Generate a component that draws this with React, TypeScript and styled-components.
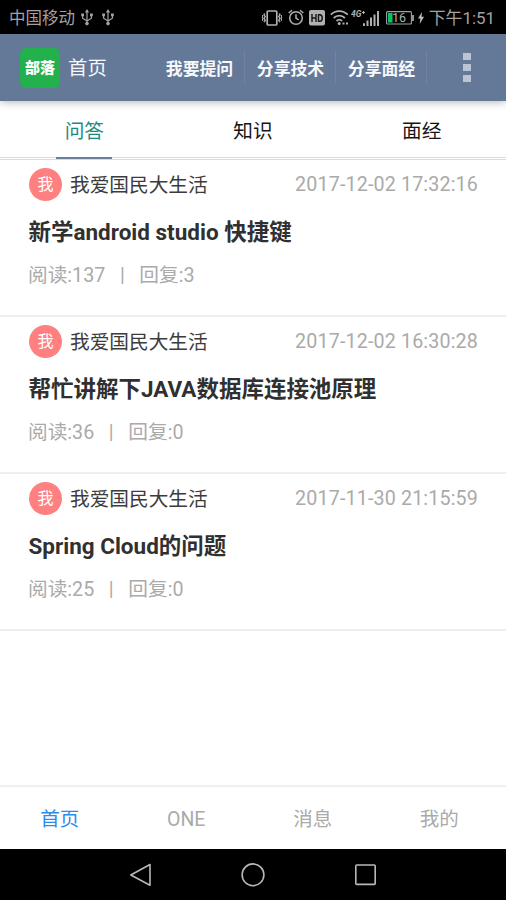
import React from 'react';
import styled, { createGlobalStyle } from 'styled-components';

const GlobalStyle = createGlobalStyle`
  body {
    margin: 0;
    background: #fff;
    font-family: Roboto, 'Noto Sans CJK SC', sans-serif;
  }
  * { box-sizing: border-box; }
`;

const Screen = styled.div`
  display: flex;
  flex-direction: column;
  width: 506px;
  height: 900px;
  overflow: hidden;
  background: #fff;
`;

const StatusBar = styled.div`
  display: flex;
  justify-content: space-between;
  height: 34px;
  flex: none;
  padding: 1px 11px 0 9px;
  background: #000;
  color: #a2a2a2;
  font-size: 16.5px;
  line-height: 34px;
  white-space: nowrap;
`;

const StatusSide = styled.div`
  display: flex;
  align-items: center;
  height: 33px;
`;

const Carrier = styled.span`
  padding-top: 2px;
`;

const StatusIcon = styled.svg<{ $gap: number }>`
  display: block;
  flex: none;
  margin-left: ${(p) => p.$gap}px;
`;

const Clock = styled.span`
  margin-left: 5px;
  font-size: 16.9px;
`;

const AppBar = styled.header`
  display: flex;
  align-items: center;
  height: 67px;
  flex: none;
  padding: 0 35px 0 20px;
  background: #647997;
  color: #f6f8fc;
  position: relative;
  box-shadow: 0 1px 8px rgba(0, 0, 0, 0.3);
`;

const Logo = styled.div`
  width: 40px;
  height: 40px;
  border-radius: 6px;
  background: #22b14c;
  color: #fff;
  font-size: 15px;
  font-weight: 900;
  line-height: 41px;
  text-align: center;
`;

const PageName = styled.h1`
  margin: 0 0 0 8px;
  padding-top: 3px;
  width: 86px;
  font-size: 19.4px;
  font-weight: 400;
  line-height: 40px;
`;

const Action = styled.a`
  display: flex;
  align-items: center;
  justify-content: center;
  width: 91px;
  height: 33px;
  padding-left: 1px;
  border-right: 1px solid #71839f;
  font-size: 16.87px;
  font-weight: 700;
  white-space: nowrap;
`;

const Overflow = styled.div`
  display: grid;
  gap: 4px;
  margin-left: auto;
`;

const Dot = styled.i`
  width: 8px;
  height: 7px;
  background: #bcc4d4;
`;

const Tabs = styled.nav`
  display: flex;
  height: 59px;
  flex: none;
  border-bottom: 1px solid #dcdcdc;
`;

const TabCell = styled.div`
  display: flex;
  flex: 1;
  justify-content: center;
  height: 57px;
  border-bottom: 1px solid #dcdcdc;
`;

const Tab = styled.span<{ $active?: boolean }>`
  width: 56px;
  height: 58px;
  flex: none;
  border-bottom: ${(p) => (p.$active ? '2px solid #6c7f9b' : '0')};
  color: ${(p) => (p.$active ? '#1d8a80' : '#151515')};
  font-size: 19.68px;
  line-height: 61px;
  text-align: center;
`;

const Feed = styled.main`
  flex: 1;
`;

const Post = styled.article`
  display: flex;
  flex-direction: column;
  height: 157px;
  padding: 8px 28px 0 28px;
  border-bottom: 2px solid #eee;
`;

const Author = styled.div`
  display: flex;
  align-items: center;
  height: 33px;
  font-size: 19.68px;
  line-height: 33px;
  color: #3c3c3c;
`;

const Avatar = styled.span`
  width: 33px;
  height: 33px;
  margin: 0 8px 0 1px;
  border-radius: 50%;
  background: #ff8080;
  color: #fff;
  font-size: 16px;
  line-height: 34px;
  text-align: center;
`;

const AuthorName = styled.span`
  padding-top: 2px;
`;

const Time = styled.time`
  margin-left: auto;
  color: #aaa;
  letter-spacing: 0.15px;
`;

const Title = styled.h2`
  margin: 16px 0 0 0.5px;
  color: #303030;
  font-size: 22.49px;
  font-weight: 700;
  line-height: 30px;
`;

const Meta = styled.div`
  margin-top: 16px;
  color: #aaa;
  font-size: 19.68px;
  line-height: 26px;
  white-space: pre;
`;

const BottomTabs = styled.nav`
  display: flex;
  height: 64px;
  flex: none;
  border-top: 2px solid #f0f0f0;
`;

const BottomTab = styled.a<{ $active?: boolean }>`
  width: 126.5px;
  padding-right: 7px;
  color: ${(p) => (p.$active ? '#2c8cee' : '#aaa')};
  font-size: 19.5px;
  line-height: 66px;
  height: 62px;
  text-align: center;
`;

const SystemNav = styled.div`
  display: flex;
  justify-content: center;
  gap: 88px;
  height: 51px;
  flex: none;
  padding-top: 14px;
  background: #000;
`;

const posts = [
  { time: '2017-12-02 17:32:16', title: '新学android studio 快捷键', reads: 137, replies: 3 },
  { time: '2017-12-02 16:30:28', title: '帮忙讲解下JAVA数据库连接池原理', reads: 36, replies: 0 },
  { time: '2017-11-30 21:15:59', title: 'Spring Cloud的问题', reads: 25, replies: 0 },
];

const Usb = ({ gap }: { gap: number }) => (
  <StatusIcon $gap={gap} width="12" height="17" viewBox="0 0 12 17" fill="none" stroke="#a2a2a2" strokeWidth="1.2">
    <path d="M6 3v11M1.6 6v3.2L6 12l4.4-2.8V6" />
    <path d="M6 0 3.9 3.6h4.2zM.2 4.6H3v2.6H.2zM9 4.6h2.8v2.6H9z" fill="#a2a2a2" stroke="none" />
    <circle cx="6" cy="14.6" r="1.8" fill="#a2a2a2" stroke="none" />
  </StatusIcon>
);

const StatusIcons = () => (
  <>
    <StatusIcon $gap={0} width="20" height="18" viewBox="0 0 20 18" fill="none" stroke="#b0b0b0" strokeWidth="1.4">
      <rect x="5.2" y="2" width="9.6" height="14" rx="1" strokeWidth="1.7" />
      <path d="M2.8 4.5 2 6l1.2 1.6L2 9.4l1.2 1.8-1.2 2M17.2 4.5 18 6l-1.2 1.6L18 9.4l-1.2 1.8 1.2 2" />
      <path d="M.6 6v6M19.4 6v6" strokeWidth="1" />
    </StatusIcon>
    <StatusIcon $gap={6} width="16" height="17" viewBox="0 0 16 17" fill="none" stroke="#b0b0b0" strokeWidth="1.5">
      <circle cx="8" cy="9" r="6.3" />
      <path d="M8 5.2V9l2.7 1.8M.7 4 4 1.2M12 1.2 15.3 4" />
    </StatusIcon>
    <StatusIcon $gap={5} width="16" height="16" viewBox="0 0 16 16">
      <rect width="16" height="15.5" rx="2" fill="#b0b0b0" />
      <path d="M3 4v8M7 4v8M3 8h4M9.5 4.7v6.6h1.2c3.4 0 3.4-6.6 0-6.6z" fill="none" stroke="#151515" strokeWidth="1.4" />
    </StatusIcon>
    <StatusIcon $gap={5} width="19" height="17" viewBox="0 0 19 17" fill="none" stroke="#b0b0b0" strokeWidth="1.8">
      <path d="M.8 5.7C5.5.9 13 .9 17.8 5.7M3.7 9c3.2-3.1 8-3.1 11.2 0M6.5 12c1.7-1.6 4-1.6 5.6 0" />
      <circle cx="9.2" cy="14.4" r="1.5" fill="#b0b0b0" stroke="none" />
      <path d="M12.5 14.5h2M16 14.5h2" strokeWidth="2" />
    </StatusIcon>
    <StatusIcon $gap={2} width="29" height="18" viewBox="0 0 29 18" fill="#b0b0b0">
      <text x="0" y="8" fontSize="8.5" fontWeight="700" fontStyle="italic" fontFamily="Roboto, sans-serif">4G</text>
      <path d="M11 3h1V2h1v1h1v1h-1v1h-1V4h-1zM12 14.2h2V17h-2zM15.5 11.5h2V17h-2zM19 8.5h2V17h-2zM22.5 5.5h2V17h-2zM26 2h2v15h-2z" />
    </StatusIcon>
    <StatusIcon $gap={6} width="29" height="14" viewBox="0 0 29 14">
      <rect x=".6" y=".6" width="24.8" height="12.4" rx="1" fill="none" stroke="#a2a2a2" strokeWidth="1.1" />
      <rect x="2" y="2" width="4.5" height="9.6" fill="#08c460" />
      <path d="M27 4v6" stroke="#a2a2a2" strokeWidth="1.8" />
      <text x="6" y="11.3" fontSize="12.5" fill="#b0b0b0" fontFamily="Roboto, sans-serif">16</text>
    </StatusIcon>
    <StatusIcon $gap={3} width="6" height="12" viewBox="0 0 6 12" fill="#c0c0c0">
      <path d="M4 0 0 6.6h2.4L1.7 12 6 4.8H3.5z" />
    </StatusIcon>
  </>
);

export default function App() {
  return (
    <Screen>
      <GlobalStyle />
      <StatusBar>
        <StatusSide>
          <Carrier>中国移动</Carrier>
          <Usb gap={6} />
          <Usb gap={9} />
        </StatusSide>
        <StatusSide>
          <StatusIcons />
          <Clock>下午1:51</Clock>
        </StatusSide>
      </StatusBar>
      <AppBar>
        <Logo>部落</Logo>
        <PageName>首页</PageName>
        <Action>我要提问</Action>
        <Action>分享技术</Action>
        <Action>分享面经</Action>
        <Overflow>
          <Dot />
          <Dot />
          <Dot />
        </Overflow>
      </AppBar>
      <Tabs>
        <TabCell><Tab $active>问答</Tab></TabCell>
        <TabCell><Tab>知识</Tab></TabCell>
        <TabCell><Tab>面经</Tab></TabCell>
      </Tabs>
      <Feed>
        {posts.map((p) => (
          <Post key={p.time}>
            <Author>
              <Avatar>我</Avatar>
              <AuthorName>我爱国民大生活</AuthorName>
              <Time>{p.time}</Time>
            </Author>
            <Title>{p.title}</Title>
            <Meta>{`阅读:${p.reads}   |   回复:${p.replies}`}</Meta>
          </Post>
        ))}
      </Feed>
      <BottomTabs>
        <BottomTab $active>首页</BottomTab>
        <BottomTab>ONE</BottomTab>
        <BottomTab>消息</BottomTab>
        <BottomTab>我的</BottomTab>
      </BottomTabs>
      <SystemNav>
        <svg width="24" height="24" viewBox="0 0 24 24" fill="none" stroke="#b8b8b8" strokeWidth="1.6" strokeLinejoin="round">
          <path d="M21 1.5v20.8L1.8 12z" />
        </svg>
        <svg width="24" height="24" viewBox="0 0 24 24" fill="none" stroke="#b8b8b8" strokeWidth="1.6">
          <circle cx="12" cy="11.8" r="10.9" />
        </svg>
        <svg width="24" height="24" viewBox="0 0 24 24" fill="none" stroke="#b8b8b8" strokeWidth="1.6">
          <rect x="2.8" y="2" width="19.4" height="19.4" rx="1" />
        </svg>
      </SystemNav>
    </Screen>
  );
}
